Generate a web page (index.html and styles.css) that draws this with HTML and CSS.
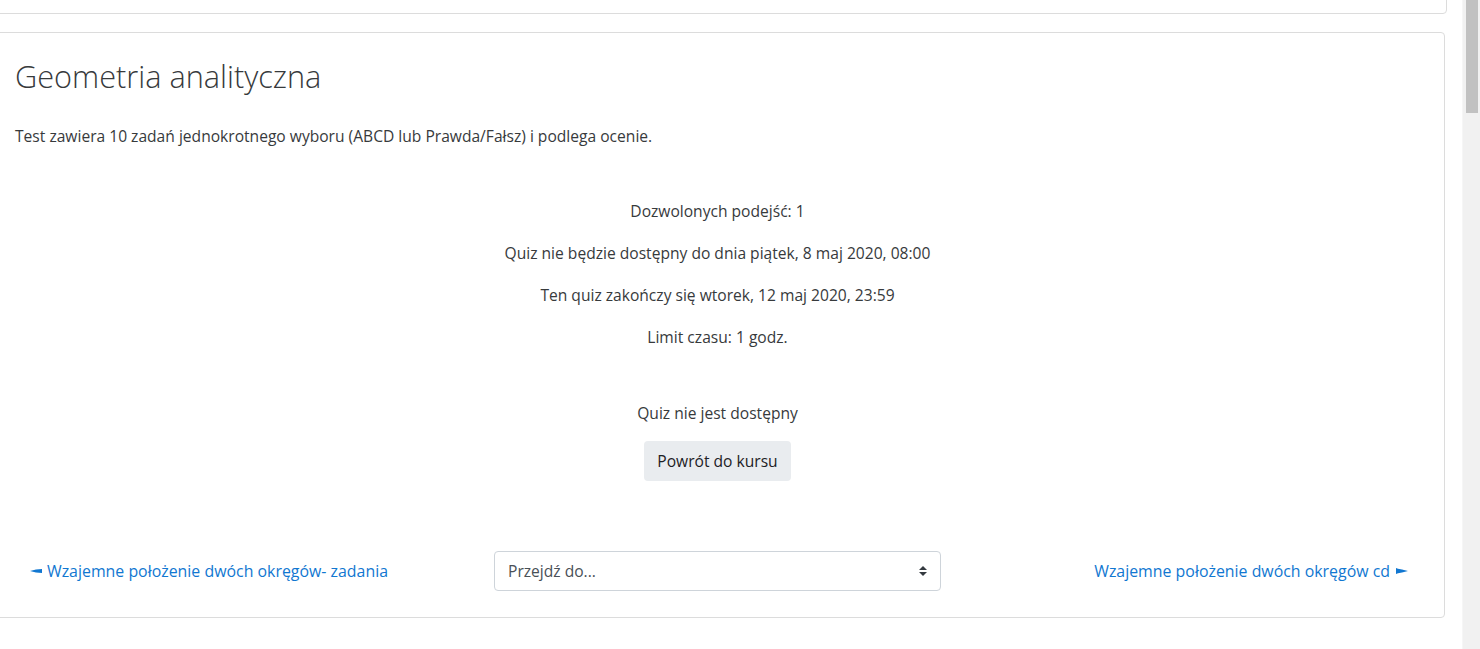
FILE: index.html
```html
<!DOCTYPE html>
<html lang="pl">
<head>
<meta charset="utf-8">
<title>Geometria analityczna</title>
<link rel="stylesheet" href="styles.css">
</head>
<body>
<div class="page">
  <main class="main">
    <div class="card card-top"></div>
    <section class="card card-quiz">
      <h2 class="title">Geometria analityczna</h2>
      <p class="intro">Test zawiera 10 zadań jednokrotnego wyboru (ABCD lub Prawda/Fałsz) i podlega ocenie.</p>
      <div class="quizinfo">
        <p>Dozwolonych podejść: 1</p>
        <p>Quiz nie będzie dostępny do dnia piątek, 8 maj 2020, 08:00</p>
        <p>Ten quiz zakończy się wtorek, 12 maj 2020, 23:59</p>
        <p>Limit czasu: 1 godz.</p>
      </div>
      <div class="status">
        <p>Quiz nie jest dostępny</p>
        <button class="btn" type="button">Powrót do kursu</button>
      </div>
      <nav class="activity-nav">
        <a class="nav-link prev" href="#"><svg class="arr" width="12" height="6" viewBox="0 0 12 6"><polygon points="0,3 6,1.6 12,1 12,5 6,4.4" fill="currentColor"/></svg>Wzajemne położenie dwóch okręgów- zadania</a>
        <div class="jump">
          <span class="jump-text">Przejdź do...</span>
          <svg class="jump-arrow" width="8" height="10" viewBox="0 0 8 10"><polygon points="4,0 8,4 0,4" fill="#343a40"/><polygon points="0,6 8,6 4,10" fill="#343a40"/></svg>
        </div>
        <a class="nav-link next" href="#">Wzajemne położenie dwóch okręgów cd<svg class="arr" width="12" height="6" viewBox="0 0 12 6"><polygon points="0,0 2,0.8 6,1.6 12,3 6,4.4 2,5.2 0,6" fill="currentColor"/></svg></a>
      </nav>
    </section>
  </main>
  <div class="scrollbar"><div class="thumb"></div></div>
</div>
</body>
</html>
```
FILE: styles.css
```css
html, body {
  margin: 0;
  padding: 0;
  height: 100%;
  overflow: hidden;
  background: #fff;
}
body {
  font-family: "Open Sans", Roboto, sans-serif;
  font-size: 15.6px;
  color: #373a3c;
}
.page {
  display: flex;
  height: 649px;
}
.main {
  flex: 1;
  min-width: 0;
}
.scrollbar {
  width: 18px;
  background: #f1f1f1;
  border-left: 1px solid #f6f6f6;
  box-sizing: border-box;
  padding: 0 2px 0 3px;
}
.thumb {
  height: 113px;
  background: #c1c1c1;
}
.card {
  border: 1px solid #dcdcdc;
  border-radius: 4px;
  background: #fff;
}
.card-top {
  height: 22px;
  margin: -10px 15px 0 -10px;
}
.card-quiz {
  margin: 18px 17px 0 -10px;
  padding: 25px 24px 26px 24px;
}
.title {
  margin: 0;
  font-size: 30.7px;
  font-weight: 300;
  line-height: 36px;
}
.intro {
  margin: 31px 0 0;
  line-height: 22px;
}
.quizinfo {
  margin-top: 53px;
  text-align: center;
  display: flex;
  flex-direction: column;
  gap: 20px;
}
.quizinfo p, .status p {
  margin: 0;
  line-height: 22px;
}
.status {
  margin-top: 54px;
  display: flex;
  flex-direction: column;
  align-items: center;
  gap: 17px;
}
.btn {
  font: inherit;
  color: #1d2125;
  background: #e9ecef;
  border: 0;
  border-radius: 4px;
  height: 40px;
  padding: 0 13px;
}
.activity-nav {
  margin-top: 70px;
  display: grid;
  grid-template-columns: 1fr 447px 1fr;
  align-items: center;
}
.nav-link {
  color: #1177d1;
  text-decoration: none;
  display: flex;
  align-items: center;
  line-height: 22px;
  font-size: 15.9px;
}
.prev {
  padding-left: 15px;
}
.prev .arr {
  margin-right: 5px;
}
.next {
  justify-self: end;
  padding-right: 12px;
}
.next .arr {
  margin-left: 6px;
}
.jump {
  height: 40px;
  box-sizing: border-box;
  border: 1px solid #ced4da;
  border-radius: 4px;
  display: flex;
  align-items: center;
  justify-content: space-between;
  padding: 0 13px 0 13px;
  color: #495057;
}
```
